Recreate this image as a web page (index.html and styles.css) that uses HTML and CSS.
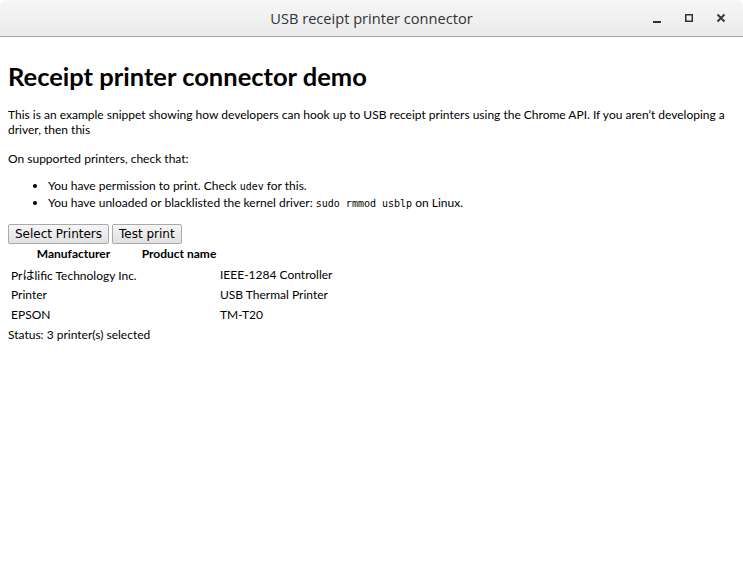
FILE: index.html
```html
<!DOCTYPE html>
<html>
<head>
<meta charset="utf-8">
<link rel="stylesheet" href="styles.css">
</head>
<body>
<div class="titlebar">
  <div class="title">USB receipt printer connector</div>
  <div class="controls">
    <svg width="12" height="12" viewBox="0 0 12 12"><rect x="2" y="9" width="8" height="2" fill="#2e3436"/></svg>
    <svg width="12" height="12" viewBox="0 0 12 12"><rect x="2.75" y="2.75" width="6.5" height="6.5" fill="none" stroke="#2e3436" stroke-width="1.5"/></svg>
    <svg width="12" height="12" viewBox="0 0 12 12"><path d="M2.5 2.5 L9.5 9.5 M9.5 2.5 L2.5 9.5" stroke="#2e3436" stroke-width="1.8"/></svg>
  </div>
</div>
<div class="content">
  <h1>Receipt printer connector demo</h1>
  <p class="intro">This is an example snippet showing how developers can hook up to USB receipt printers using the Chrome API. If you aren’t developing a driver, then this</p>
  <p class="check">On supported printers, check that:</p>
  <ul>
    <li>You have permission to print. Check <code>udev</code> for this.</li>
    <li>You have unloaded or blacklisted the kernel driver: <code>sudo rmmod usblp</code> on Linux.</li>
  </ul>
  <div class="buttons">
    <button class="btn">Select Printers</button>
    <button class="btn">Test print</button>
  </div>
  <div class="thead">
    <div class="th th-man">Manufacturer</div>
    <div class="th th-prod">Product name</div>
  </div>
  <div class="rows">
    <div class="row"><span class="c1">Prはlific Technology Inc.</span><span class="c2">IEEE-1284 Controller</span></div>
    <div class="row"><span class="c1">Printer</span><span class="c2">USB Thermal Printer</span></div>
    <div class="row"><span class="c1">EPSON</span><span class="c2">TM-T20</span></div>
  </div>
  <div class="status">Status: 3 printer(s) selected</div>
</div>
</body>
</html>
```

FILE: styles.css
```css
html, body {
  margin: 0;
  padding: 0;
  background: #fff;
}
body {
  font-family: "Lato", "Noto Sans CJK JP", sans-serif;
  font-size: 12px;
  color: #000;
  width: 743px;
  height: 580px;
  overflow: hidden;
}
.titlebar {
  height: 36px;
  border-bottom: 1px solid #a5a5a5;
  background: linear-gradient(#f6f6f6, #ebebeb);
  display: flex;
  align-items: center;
  justify-content: center;
  position: relative;
  border-radius: 6px 6px 0 0;
}
.title {
  font-family: "Open Sans", sans-serif;
  font-size: 14.6px;
  color: #2e3436;
}
.controls {
  position: absolute;
  right: 16px;
  top: 12px;
  display: flex;
  gap: 20px;
}
.content {
  padding: 8px;
}
h1 {
  font-size: 25.5px;
  font-weight: bold;
  margin: 17px 0;
  line-height: 28px;
}
p {
  line-height: 15px;
}
.intro { margin: 0; }
.check { margin: 14px 0 12px; }
ul {
  margin: 12px 0 12px;
  padding-left: 40px;
  line-height: 16px;
}
code {
  font-family: "DejaVu Sans Mono", monospace;
  font-size: 10px;
}
.buttons {
  display: flex;
  gap: 3px;
}
.btn {
  font-family: "DejaVu Sans", sans-serif;
  font-size: 12px;
  height: 20px;
  padding: 0 6px;
  border: 1px solid #a9a9a9;
  border-radius: 2px;
  background: linear-gradient(#f6f6f6, #e0e0e0);
  color: #000;
}
.thead {
  display: flex;
  font-weight: bold;
  margin-top: 2px;
  line-height: 15px;
  white-space: nowrap;
}
.th-man { width: 131px; text-align: center; }
.th-prod { width: 80px; text-align: center; }
.rows { margin-top: 3px; }
.row {
  display: flex;
  height: 20px;
  align-items: center;
  padding-left: 3px;
}
.c1 { width: 209px; }
.status { line-height: 15px; margin-top: 3px; }
```
